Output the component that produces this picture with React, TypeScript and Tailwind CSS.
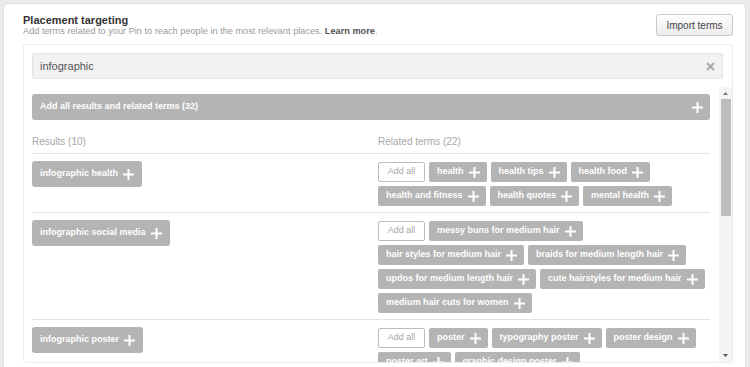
import React from "react";

const Plus = ({ size = 11 }: { size?: number }) => (
  <svg width={size} height={size} viewBox="0 0 11 11" className="shrink-0">
    <rect x="0" y="4.5" width="11" height="2" fill="#fff" />
    <rect x="4.5" y="0" width="2" height="11" fill="#fff" />
  </svg>
);

const Chip = ({ label }: { label: string }) => (
  <div className="flex h-[20px] items-center gap-[5px] rounded-[2px] bg-[#b4b4b4] pl-[8px] pr-[7px] text-[9px] font-bold text-white">
    <span>{label}</span>
    <Plus />
  </div>
);

const AddAll = () => (
  <div className="flex h-[20px] w-[47px] items-center justify-center rounded-[2px] border border-[#bdbdbd] bg-white text-[9px] text-[#a8a8a8]">
    Add all
  </div>
);

const ResultChip = ({ label }: { label: string }) => (
  <div className="flex h-[26px] items-center gap-[5px] rounded-[3px] bg-[#b4b4b4] pl-[8px] pr-[8px] text-[9px] font-bold text-white">
    <span>{label}</span>
    <Plus />
  </div>
);

type Row = { result: string; lines: string[][] };

const rows: Row[] = [
  {
    result: "infographic health",
    lines: [
      ["health", "health tips", "health food"],
      ["health and fitness", "health quotes", "mental health"],
    ],
  },
  {
    result: "infographic social media",
    lines: [
      ["messy buns for medium hair"],
      ["hair styles for medium hair", "braids for medium length hair"],
      ["updos for medium length hair", "cute hairstyles for medium hair"],
      ["medium hair cuts for women"],
    ],
  },
  {
    result: "infographic poster",
    lines: [
      ["poster", "typography poster", "poster design"],
      ["poster art", "graphic design poster"],
    ],
  },
];

export default function App() {
  return (
    <div className="h-[367px] w-[750px] overflow-hidden bg-[#ebebeb] pl-[3px] pt-[3px] font-['Liberation_Sans',Arial,sans-serif]">
      <div className="h-[420px] w-[743px] rounded-[4px] border border-[#e0e0e0] bg-white pl-[19px] pr-[12px] pt-[10px]">
        <div className="flex items-start justify-between">
          <div>
            <div className="text-[11px] font-bold leading-[13px] text-[#333]">Placement targeting</div>
            <div className="text-[9.2px] leading-[9px] text-[#9a9a9a]">
              Add terms related to your Pin to reach people in the most relevant places.{" "}
              <span className="font-bold text-[#555]">Learn more</span>.
            </div>
          </div>
          <div className="flex h-[22px] w-[77px] items-center justify-center rounded-[3px] border border-[#c9c9c9] bg-gradient-to-b from-[#fdfdfd] to-[#ededed] text-[10px] text-[#444]">
            Import terms
          </div>
        </div>

        <div className="mt-[8px] w-[710px] rounded-[3px] border border-[#ececec]">
          <div className="pl-[8px] pr-[9px] pt-[8px]">
            <div className="flex h-[26px] items-center justify-between rounded-[2px] border border-[#e4e4e4] bg-[#f2f2f2] pl-[7px] pr-[7px]">
              <span className="text-[11px] text-[#555]">infographic</span>
              <svg width="9" height="9" viewBox="0 0 9 9">
                <path d="M1 1L8 8M8 1L1 8" stroke="#a8a8a8" strokeWidth="2" />
              </svg>
            </div>
          </div>

          <div className="mt-[8px] flex h-[275px] overflow-hidden pl-[8px]">
            <div className="w-[678px] pt-[7px]">
              <div className="flex h-[26px] items-center justify-between rounded-[3px] bg-[#b4b4b4] pl-[8px] pr-[7px] text-[9px] font-bold text-white">
                <span>Add all results and related terms (32)</span>
                <Plus />
              </div>

              <div className="flex border-b border-[#e4e4e4] pb-[5px] pt-[16px] text-[10px] leading-[12px] text-[#a8a8a8]">
                <div className="w-[346px]">Results (10)</div>
                <div>Related terms (22)</div>
              </div>

              {rows.map((row) => (
                <div key={row.result} className="flex border-b border-[#e4e4e4] pb-[6px] pt-[7px]">
                  <div className="w-[346px]">
                    <div className="flex">
                      <ResultChip label={row.result} />
                    </div>
                  </div>
                  <div className="flex flex-1 flex-col gap-[4px] pt-[1px]">
                    {row.lines.map((line, i) => (
                      <div key={i} className="flex gap-[4px]">
                        {i === 0 && <AddAll />}
                        {line.map((t) => (
                          <Chip key={t} label={t} />
                        ))}
                      </div>
                    ))}
                  </div>
                </div>
              ))}
            </div>

            <div className="ml-auto flex w-[13px] flex-col items-center bg-[#f5f5f5]">
              <div className="flex h-[12px] items-center">
                <svg width="5" height="3" viewBox="0 0 5 3">
                  <path d="M0 3L2.5 0L5 3Z" fill="#777" />
                </svg>
              </div>
              <div className="h-[117px] w-[10px] bg-[#bdbdbd]" />
              <div className="flex-1" />
              <div className="flex h-[14px] items-center">
                <svg width="5" height="3" viewBox="0 0 5 3">
                  <path d="M0 0L2.5 3L5 0Z" fill="#555" />
                </svg>
              </div>
            </div>
          </div>
        </div>
      </div>
    </div>
  );
}
